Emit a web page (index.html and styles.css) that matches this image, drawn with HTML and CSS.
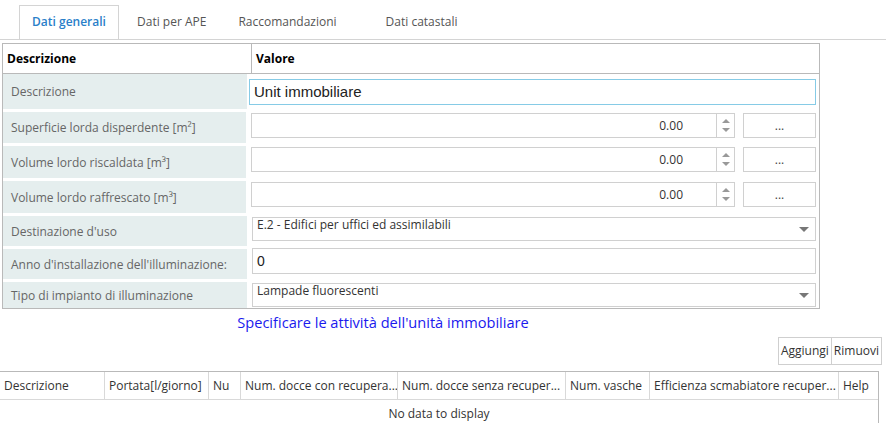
FILE: index.html
```html
<!DOCTYPE html>
<html lang="it">
<head>
    <meta charset="UTF-8">
    <title>Dati generali</title>
    <link rel="stylesheet" href="styles.css">
</head>
<body>
    <div class="tabs">
        <div class="tab active">Dati generali</div>
        <div class="tab">Dati per APE</div>
        <div class="tab">Raccomandazioni</div>
        <div class="tab last">Dati catastali</div>
    </div>

    <div class="prop-grid">
        <div class="prop-head">
            <div class="head-label">Descrizione</div>
            <div class="head-value">Valore</div>
        </div>

        <div class="prop-row h-first">
            <div class="label">Descrizione</div>
            <div class="value">
                <div class="text-input focused">Unit immobiliare</div>
            </div>
        </div>

        <div class="prop-row h-num">
            <div class="label">Superficie lorda disperdente [m²]</div>
            <div class="value top">
                <div class="num-input">
                    <span class="num-text">0.00</span>
                    <span class="spin"><i class="up"></i><i class="down"></i></span>
                </div>
                <div class="dots-btn">...</div>
            </div>
        </div>

        <div class="prop-row h-num2">
            <div class="label">Volume lordo riscaldata [m³]</div>
            <div class="value top">
                <div class="num-input">
                    <span class="num-text">0.00</span>
                    <span class="spin"><i class="up"></i><i class="down"></i></span>
                </div>
                <div class="dots-btn">...</div>
            </div>
        </div>

        <div class="prop-row h-num2">
            <div class="label">Volume lordo raffrescato [m³]</div>
            <div class="value top">
                <div class="num-input">
                    <span class="num-text">0.00</span>
                    <span class="spin"><i class="up"></i><i class="down"></i></span>
                </div>
                <div class="dots-btn">...</div>
            </div>
        </div>

        <div class="prop-row h-sel">
            <div class="label">Destinazione d'uso</div>
            <div class="value top">
                <div class="select-box">E.2 - Edifici per uffici ed assimilabili<i class="caret"></i></div>
            </div>
        </div>

        <div class="prop-row h-sel">
            <div class="label">Anno d'installazione dell'illuminazione:</div>
            <div class="value anno">
                <div class="text-input plain">0</div>
            </div>
        </div>

        <div class="prop-row h-last">
            <div class="label">Tipo di impianto di illuminazione</div>
            <div class="value top">
                <div class="select-box">Lampade fluorescenti<i class="caret"></i></div>
            </div>
        </div>
    </div>

    <div class="note">Specificare le attività dell'unità immobiliare</div>

    <div class="toolbar">
        <div class="tool-btn">Aggiungi</div>
        <div class="tool-btn">Rimuovi</div>
    </div>

    <div class="data-grid">
        <div class="grid-head">
            <div class="col c1">Descrizione</div>
            <div class="col c2">Portata[l/giorno]</div>
            <div class="col c3">Nu</div>
            <div class="col c4">Num. docce con recupera...</div>
            <div class="col c5">Num. docce senza recuper...</div>
            <div class="col c6">Num. vasche</div>
            <div class="col c7">Efficienza scmabiatore recuper...</div>
            <div class="col c8">Help</div>
        </div>
        <div class="empty-row">No data to display</div>
    </div>
</body>
</html>
```

FILE: styles.css
```css
body {
    margin: 0;
    font-family: "Open Sans", "Noto Sans", sans-serif;
    font-size: 12px;
    color: #333;
    background-color: #fff;
    width: 886px;
    height: 423px;
    overflow: hidden;
}

/* tabs */
.tabs {
    display: flex;
    margin-top: 5px;
    padding-left: 19px;
    border-bottom: 1px solid #d4d4d4;
    height: 34px;
}
.tab {
    padding: 0 15px;
    line-height: 32px;
    color: #555;
    white-space: nowrap;
    border: 1px solid transparent;
    border-bottom: none;
    margin-bottom: -1px;
}
.tab.active {
    color: #2a7fc9;
    font-weight: 600;
    border-color: #d4d4d4;
    background-color: #fff;
    height: 34px;
    width: 100px;
    padding: 0;
    box-sizing: border-box;
    text-align: center;
    margin-right: 2px;
}
.tab.last {
    margin-left: 17px;
}

/* property grid */
.prop-grid {
    margin: 3px 0 0 2px;
    width: 816px;
    border: 1px solid #b9b9b9;
}
.prop-head {
    display: flex;
    height: 29px;
    border-bottom: 1px solid #b9b9b9;
    font-weight: bold;
    color: #000;
}
.head-label {
    width: 244px;
    padding-left: 4px;
    line-height: 29px;
    border-right: 1px solid #b9b9b9;
}
.head-value {
    padding-left: 4px;
    line-height: 29px;
}
.prop-row {
    display: flex;
    margin-bottom: 3px;
}
.prop-row.h-first { height: 35px; }
.prop-row.h-num { height: 31px; }
.prop-row.h-num2 { height: 32px; }
.prop-row.h-sel { height: 30px; }
.prop-row.h-last { height: 26px; margin-bottom: 0; }

.label {
    width: 236px;
    padding-left: 8px;
    background-color: #e5eeee;
    color: #666;
    display: flex;
    align-items: center;
}
.value {
    flex: 1;
    display: flex;
    align-items: center;
    padding-left: 2px;
    padding-right: 3px;
}
.value.top {
    align-items: flex-start;
    padding-left: 5px;
    padding-top: 1px;
}
.value.anno {
    align-items: flex-start;
    padding-left: 5px;
    margin-top: -1px;
}

.text-input {
    flex: 1;
    height: 24px;
    line-height: 24px;
    border: 1px solid #d0d0d0;
    padding-left: 4px;
    color: #222;
    font-size: 13px;
}
.text-input.focused {
    border-color: #86cbe6;
    font-family: "Liberation Sans", Arial, sans-serif;
    font-size: 15px;
}
.text-input.plain {
    font-family: "Liberation Sans", Arial, sans-serif;
    font-size: 14px;
}

.num-input {
    width: 482px;
    height: 23px;
    border: 1px solid #d0d0d0;
    display: flex;
    justify-content: flex-end;
}
.num-text {
    line-height: 23px;
    padding-right: 33px;
    color: #333;
}
.spin {
    width: 17px;
    border-left: 1px solid #d0d0d0;
    display: flex;
    flex-direction: column;
    align-items: center;
    justify-content: center;
    gap: 5px;
}
.spin i {
    width: 0;
    height: 0;
    border-left: 4px solid transparent;
    border-right: 4px solid transparent;
}
.spin .up { border-bottom: 4px solid #999; }
.spin .down { border-top: 4px solid #999; }

.dots-btn {
    width: 71px;
    height: 23px;
    margin-left: 8px;
    border: 1px solid #d0d0d0;
    text-align: center;
    line-height: 23px;
    color: #444;
}

.select-box {
    flex: 1;
    height: 22px;
    border: 1px solid #d0d0d0;
    padding: 0 4px;
    position: relative;
    line-height: 14px;
    color: #333;
}
.caret {
    position: absolute;
    right: 6px;
    top: 9px;
    width: 0;
    height: 0;
    border-left: 5px solid transparent;
    border-right: 5px solid transparent;
    border-top: 5px solid #777;
}

/* note and toolbar */
.note {
    text-align: center;
    width: 766px;
    margin-top: 3px;
    color: #1a1aee;
    font-size: 14.6px;
    line-height: 20px;
}
.toolbar {
    display: flex;
    justify-content: flex-end;
    margin-top: 5px;
    padding-right: 4px;
}
.tool-btn {
    border: 1px solid #cfcfcf;
    height: 26px;
    line-height: 26px;
    padding: 0 2px;
    color: #333;
}
.tool-btn + .tool-btn {
    border-left: none;
}

/* data grid */
.data-grid {
    margin-top: 6px;
    width: 878px;
    border-top: 1px solid #b9b9b9;
    border-right: 1px solid #b9b9b9;
    border-bottom: 1px solid #b9b9b9;
}
.grid-head {
    display: flex;
    height: 27px;
    border-bottom: 1px solid #d9d9d9;
}
.col {
    line-height: 27px;
    padding-left: 4px;
    border-right: 1px solid #d9d9d9;
    white-space: nowrap;
    overflow: hidden;
    color: #333;
}
.c1 { width: 100px; }
.c2 { width: 99px; }
.c3 { width: 27px; }
.c4 { width: 152px; }
.c5 { width: 163px; }
.c6 { width: 79px; }
.c7 { width: 184px; }
.c8 { border-right: none; flex: 1; }
.empty-row {
    height: 28px;
    line-height: 28px;
    text-align: center;
    color: #333;
}
```
